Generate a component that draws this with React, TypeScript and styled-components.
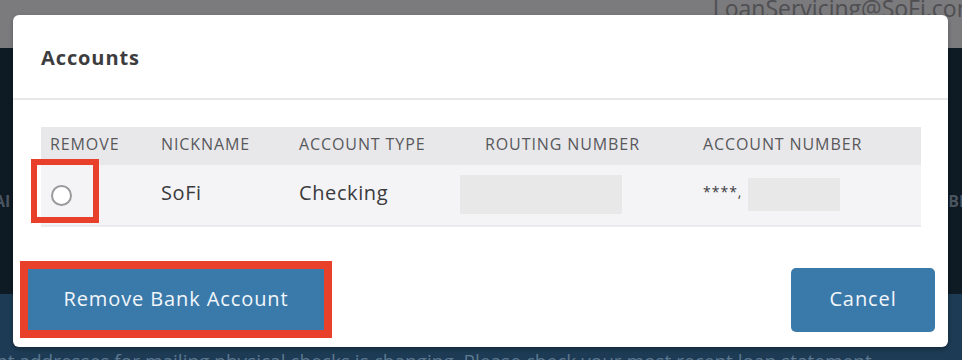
import React, { useState } from 'react';
import styled, { createGlobalStyle } from 'styled-components';

const GlobalStyle = createGlobalStyle`
  html, body {
    margin: 0;
    padding: 0;
    width: 962px;
    height: 360px;
    overflow: hidden;
    font-family: "Open Sans", "Liberation Sans", sans-serif;
  }
`;

const cuentas = [{ id: 1, nickname: 'SoFi', tipo: 'Checking', ultimos: '****,' }];

const App: React.FC = () => {
  const [selecionada, setSelecionada] = useState<number | null>(null);

  return (
    <>
      <GlobalStyle />
      <Page>
        <TopStrip>
          <Email>LoanServicing@SoFi.com</Email>
        </TopStrip>
        <DarkBand>
          <BandText>AI</BandText>
          <BandText>BE</BandText>
        </DarkBand>
        <BlueBand>
          <Notice>nt addresses for mailing physical checks is changing. Please check your most recent loan statement</Notice>
        </BlueBand>

        <Modal>
          <Header>
            <Title>Accounts</Title>
          </Header>
          <Body>
            <Table>
              <HeadRow>
                <HeadCell>Remove</HeadCell>
                <HeadCell>Nickname</HeadCell>
                <HeadCell>Account Type</HeadCell>
                <HeadCell>Routing Number</HeadCell>
                <HeadCell>Account Number</HeadCell>
              </HeadRow>
              {cuentas.map((c) => (
                <BodyRow key={c.id}>
                  <RadioCell>
                    <Radio $checked={selecionada === c.id} onClick={() => setSelecionada(c.id)} />
                    <Highlight />
                  </RadioCell>
                  <Cell>{c.nickname}</Cell>
                  <Cell>{c.tipo}</Cell>
                  <Cell>
                    <Redacted $w={162} $h={39} $shift={-25} />
                  </Cell>
                  <Cell>
                    <Stars>{c.ultimos}</Stars>
                    <Redacted $w={92} $h={33} $shift={0} />
                  </Cell>
                </BodyRow>
              ))}
            </Table>
          </Body>
          <Footer>
            <Button $marked>Remove Bank Account</Button>
            <Button>Cancel</Button>
          </Footer>
        </Modal>
      </Page>
    </>
  );
};

export default App;

const Page = styled.div`
  position: relative;
  width: 962px;
  height: 360px;
  display: flex;
  flex-direction: column;
  overflow: hidden;
`;

const TopStrip = styled.div`
  height: 48px;
  background: #7b7a7d;
  display: flex;
  justify-content: flex-end;
  align-items: flex-start;
`;

const Email = styled.span`
  margin-top: -8px;
  margin-right: -16px;
  font-size: 23px;
  color: #4f4f52;
  white-space: nowrap;
`;

const DarkBand = styled.div`
  height: 246px;
  background: #0e1a24;
  display: flex;
  justify-content: space-between;
  align-items: center;
  padding-top: 60px;
  box-sizing: border-box;
`;

const BandText = styled.span`
  font-size: 16px;
  font-weight: 700;
  color: #4a5560;
  margin: 0 -6px;
`;

const BlueBand = styled.div`
  flex: 1;
  background: #1d3b54;
  display: flex;
  align-items: flex-end;
`;

const Notice = styled.span`
  font-size: 19px;
  color: #5c7890;
  white-space: nowrap;
  margin-left: -4px;
  margin-bottom: -14px;
`;

const Modal = styled.div`
  position: absolute;
  left: 13px;
  top: 15px;
  width: 935px;
  height: 332px;
  background: #fff;
  border-radius: 6px;
  display: flex;
  flex-direction: column;
  box-shadow: 0 2px 4px rgba(0, 0, 0, 0.3);
`;

const Header = styled.div`
  height: 85px;
  border-bottom: 2px solid #e8e8ea;
  display: flex;
  align-items: center;
  padding-left: 28px;
  padding-top: 1px;
  box-sizing: border-box;
`;

const Title = styled.h2`
  margin: 0;
  font-size: 20px;
  font-weight: 700;
  letter-spacing: 0.9px;
  color: #3d3d40;
`;

const Body = styled.div`
  padding: 27px 27px 0 28px;
`;

const Table = styled.div`
  display: grid;
  grid-template-columns: 111px 138px 186px 218px 1fr;
  border-bottom: 2px solid #ebebee;
`;

const HeadRow = styled.div`
  display: contents;
`;

const HeadCell = styled.div`
  background: #e8e8ea;
  height: 38px;
  box-sizing: border-box;
  display: flex;
  align-items: center;
  padding: 0 0 4px 9px;
  font-size: 16px;
  text-transform: uppercase;
  color: #58585c;
  letter-spacing: 0.9px;
  white-space: nowrap;
`;

const BodyRow = styled.div`
  display: contents;
`;

const Cell = styled.div`
  background: #f4f4f6;
  height: 60px;
  box-sizing: border-box;
  display: flex;
  align-items: center;
  padding: 0 0 5px 9px;
  font-size: 20px;
  letter-spacing: 0.6px;
  color: #3a3a3d;
`;

const RadioCell = styled(Cell)`
  position: relative;
  padding-left: 10px;
`;

const Highlight = styled.span`
  position: absolute;
  left: -10px;
  top: -6px;
  width: 68px;
  height: 64px;
  border: 6px solid #e8402a;
  box-sizing: border-box;
  pointer-events: none;
`;

const Radio = styled.span<{ $checked: boolean }>`
  width: 21px;
  height: 21px;
  margin-top: 5px;
  border-radius: 50%;
  border: 2px solid #9a9a9c;
  background: #fff;
  box-sizing: border-box;
  cursor: pointer;
  box-shadow: ${(p) => (p.$checked ? 'inset 0 0 0 4px #fff, inset 0 0 0 10px #3a7aab' : 'none')};
`;

const Redacted = styled.span<{ $w: number; $h: number; $shift: number }>`
  display: inline-block;
  width: ${(p) => p.$w}px;
  height: ${(p) => p.$h}px;
  margin-top: 4px;
  background: #e8e8e8;
  margin-left: ${(p) => p.$shift}px;
`;

const Stars = styled.span`
  font-size: 14px;
  letter-spacing: 1px;
  width: 45px;
  margin-top: -2px;
`;

const Footer = styled.div`
  flex: 1;
  display: flex;
  justify-content: space-between;
  align-items: flex-end;
  padding: 0 13px 15px 15px;
`;

const Button = styled.button<{ $marked?: boolean }>`
  height: ${(p) => (p.$marked ? '61px' : '64px')};
  width: ${(p) => (p.$marked ? '296px' : '144px')};
  padding: 0 0 3px;
  margin-bottom: ${(p) => (p.$marked ? '2px' : '0')};
  background: #3a7aab;
  color: #f2f6fa;
  border: none;
  border-radius: ${(p) => (p.$marked ? '0' : '5px')};
  outline: ${(p) => (p.$marked ? '8px solid #e8402a' : 'none')};
  font-family: "Open Sans", "Liberation Sans", sans-serif;
  font-size: 20px;
  letter-spacing: 0.9px;
  cursor: pointer;
`;
